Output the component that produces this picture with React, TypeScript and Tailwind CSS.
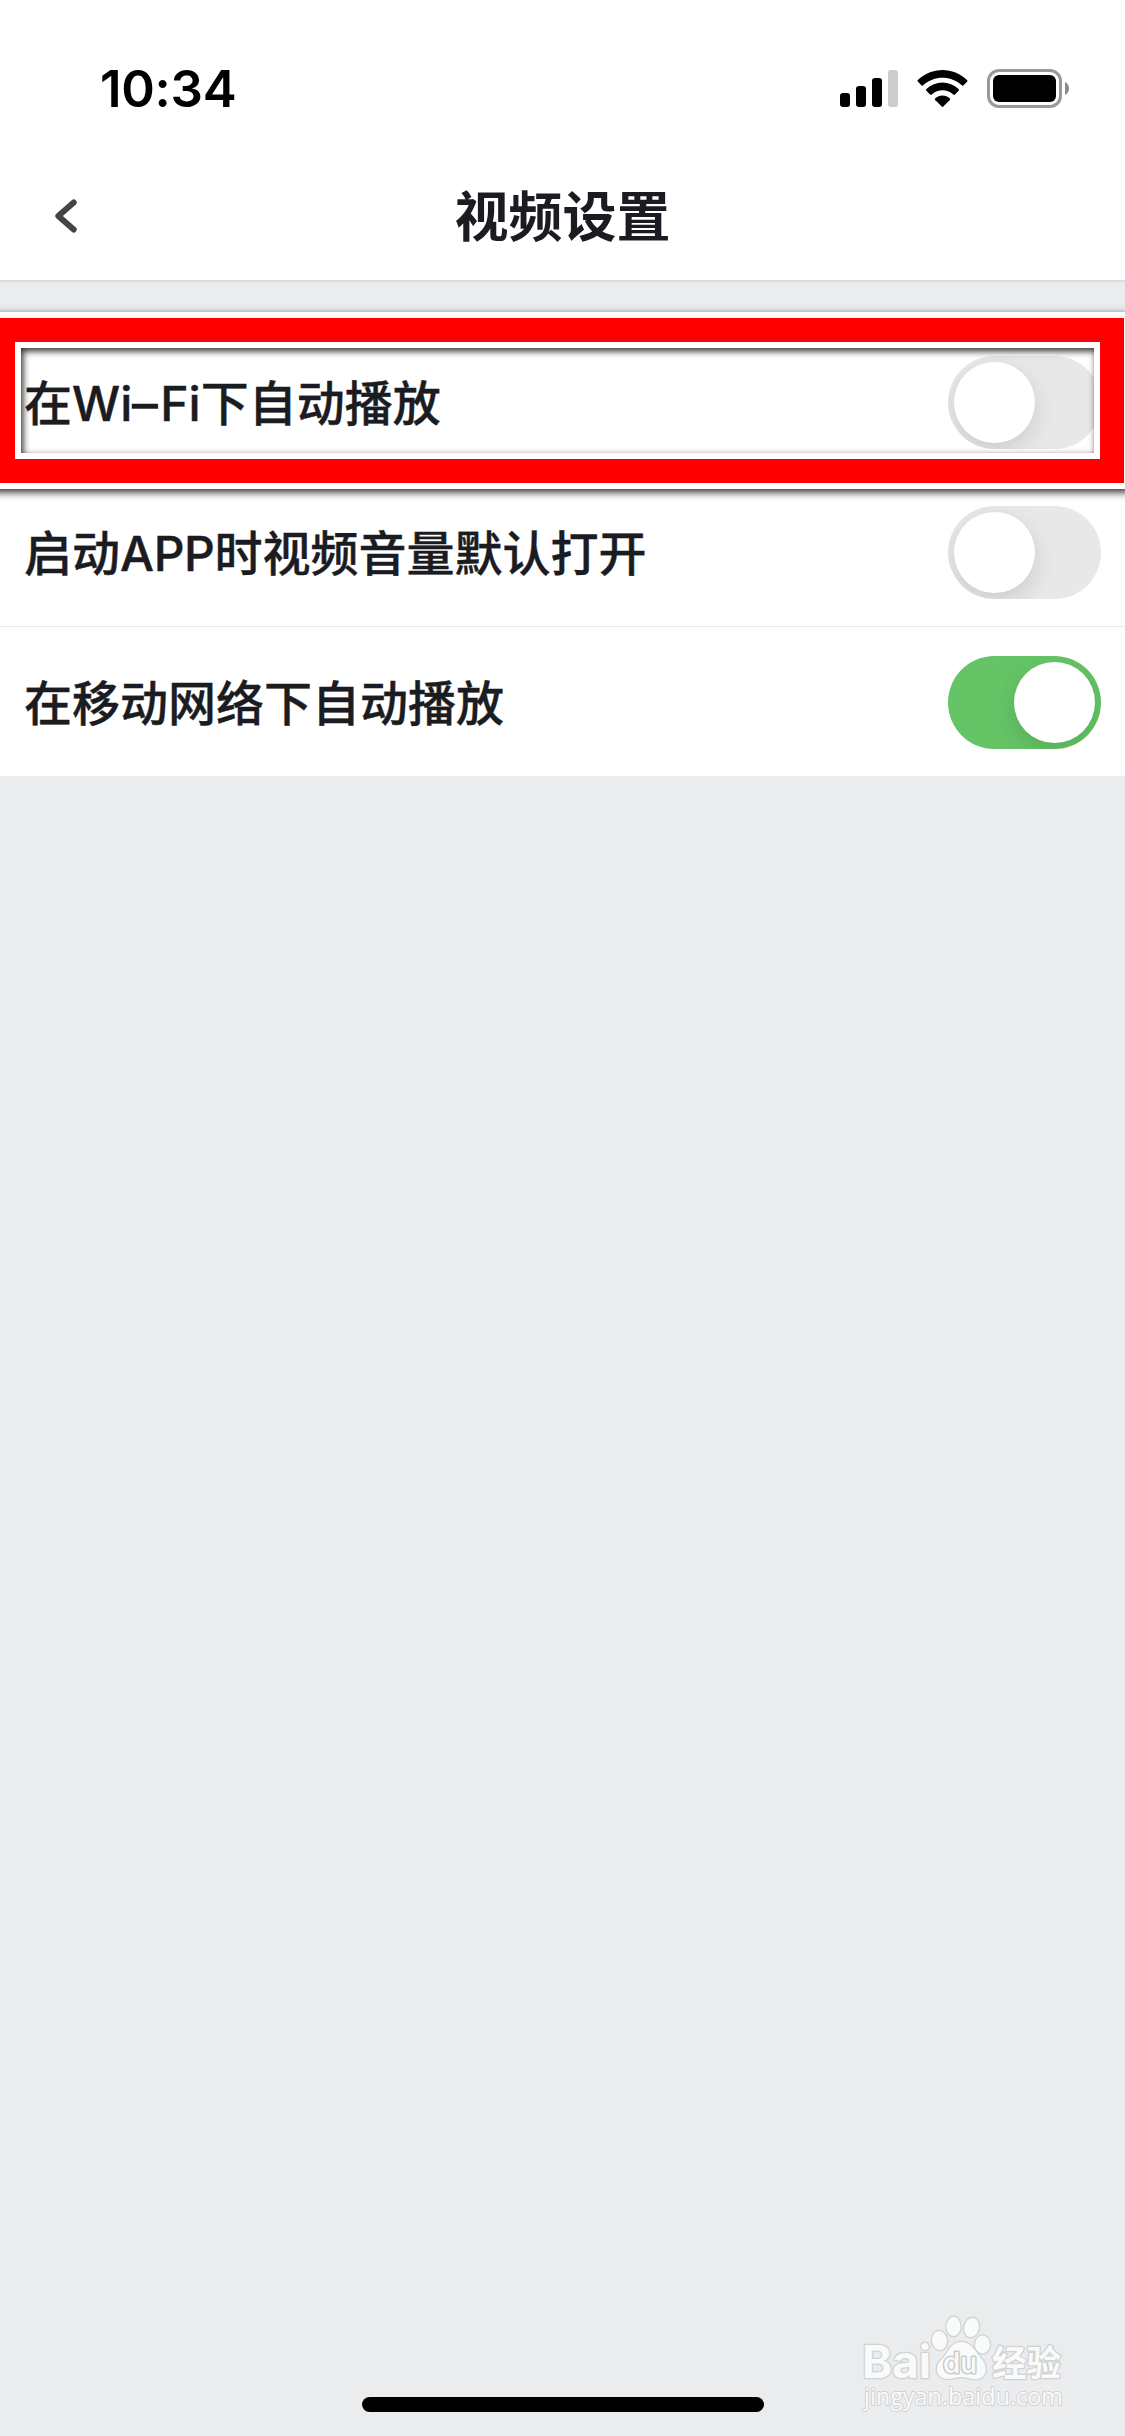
import React from 'react';

function StatusBar() {
  return (
    <div className="flex h-[150px] items-start justify-between pl-[100px] pr-[56px] pt-[69px]">
      <div className="h-[40px] whitespace-nowrap text-[51px] font-semibold leading-[40px] tracking-[-0.3px] text-black">
        10:34
      </div>
      <div className="flex h-[39px] items-start">
        <div className="mt-[1px] flex h-[37px] items-end gap-[6px]">
          <div className="h-[14px] w-[10px] rounded-[3px] bg-black" />
          <div className="h-[21px] w-[10px] rounded-[3px] bg-black" />
          <div className="h-[29px] w-[10px] rounded-[3px] bg-black" />
          <div className="h-[37px] w-[10px] rounded-[3px] bg-[#cccccc]" />
        </div>
        <svg className="ml-[19px] mt-[1px]" width="51" height="37" viewBox="0 0 51 37">
          <path d="M0.6 10.2 Q0.2 11.2 1 11.8 L4.6 15.4 Q5.4 16 6.2 15.2 C17 5.2 34 5.2 44.8 15.2 Q45.6 16 46.4 15.4 L50 11.8 Q50.8 11.2 50.2 10.2 C36 -3.4 15 -3.4 0.6 10.2Z" />
          <path d="M9.2 19.2 Q8.8 20.2 9.4 20.8 L13 24.4 Q13.8 25.2 14.8 24.4 C21 18.8 30 18.8 36.2 24.4 Q37.2 25.2 38 24.4 L41.6 20.8 Q42.2 20.2 41.8 19.2 C32.4 10.4 18.6 10.4 9.2 19.2Z" />
          <path d="M18 28.4 Q17.6 29.4 18.4 30.2 L25 36.7 Q25.5 37.1 26 36.7 L32.6 30.2 Q33.4 29.4 33 28.4 C28.6 24.4 22.4 24.4 18 28.4Z" />
        </svg>
        <div className="ml-[19px] flex h-[39px] w-[75px] rounded-[12px] border-[3px] border-[#999999] p-[3px]">
          <div className="h-[27px] w-[63px] rounded-[6px] bg-black" />
        </div>
        <svg className="ml-[3px] mt-[13px]" width="4" height="13" viewBox="0 0 4 13">
          <path d="M0 0 C5.3 2.2 5.3 10.8 0 13Z" fill="#8a8a8a" />
        </svg>
      </div>
    </div>
  );
}

function Toggle({ on = false }: { on?: boolean }) {
  return (
    <div
      className={
        on
          ? 'flex h-[93px] w-[153px] justify-end overflow-hidden rounded-full bg-[#65c466] p-[6px]'
          : 'flex h-[93px] w-[153px] justify-start overflow-hidden rounded-full bg-[#e8e8e8] p-[6px]'
      }
    >
      <div className="h-[81px] w-[81px] rounded-full bg-white shadow-[0_8px_22px_rgba(0,25,15,0.13)]" />
    </div>
  );
}

function Row({ children, on, divider }: { children: React.ReactNode; on?: boolean; divider?: boolean }) {
  return (
    <div
      className={
        divider
          ? 'flex h-[150px] items-start justify-between border-t border-[#e8e9ea] bg-white pl-[24px] pr-[24px] pt-[29px]'
          : 'flex h-[150px] items-start justify-between bg-white pl-[24px] pr-[24px] pt-[30px]'
      }
    >
      <div className="mt-[1px] h-[93px] whitespace-nowrap text-[48px] font-medium leading-[93px] text-[#1b1c22] [-webkit-text-stroke:0.4px_#1b1c22]">
        {children}
      </div>
      <Toggle on={on} />
    </div>
  );
}

function Watermark() {
  return (
    <svg
      className="absolute right-[55px] top-[2310px]"
      width="210"
      height="105"
      viewBox="0 0 210 105"
      fill="#f9fafa"
      stroke="#d0d2d3"
      strokeWidth="2.6"
      paintOrder="stroke"
      strokeLinejoin="round"
    >
      <text x="2" y="68" fontFamily="Inter" fontWeight="700" fontSize="45" textLength="69" lengthAdjust="spacingAndGlyphs">Bai</text>
      <ellipse cx="79.500" cy="30.500" rx="7.500" ry="9.500" transform="rotate(-8 79.500 30.500)" />
      <ellipse cx="93.500" cy="16.500" rx="7" ry="9.700" />
      <ellipse cx="111.500" cy="17.500" rx="7.300" ry="9.700" transform="rotate(12 111.500 17.500)" />
      <ellipse cx="122.500" cy="34.500" rx="7.500" ry="9" />
      <path d="M101 32 C90 32 88 44 81 50 C74 57 76 68 87 69 C93 69 96 67 101 67 C107 67 111 70 118 69 C127 67 128 57 122 49 C115 42 112 32 101 32Z" />
      <text x="83" y="63" fontFamily="Inter" fontWeight="500" fontSize="28" strokeWidth="3" stroke="#c9cbcc" textLength="34" lengthAdjust="spacingAndGlyphs">du</text>
      <text x="132" y="66" fontFamily="Noto Sans CJK SC" fontWeight="700" fontSize="35" textLength="69" lengthAdjust="spacingAndGlyphs">经验</text>
      <text x="4" y="95" fontFamily="Open Sans" fontWeight="500" fontSize="23.5" strokeWidth="1.800" textLength="199" lengthAdjust="spacingAndGlyphs">jingyan.baidu.com</text>
    </svg>
  );
}

export default function App() {
  return (
    <div className="relative flex h-[2436px] w-[1125px] flex-col overflow-hidden bg-[#ebecee] font-['Inter','Noto_Sans_CJK_SC',sans-serif]">
      <header className="h-[282px] border-b-2 border-[#dbdcdf] bg-white">
        <StatusBar />
        <div className="grid h-[130px] grid-cols-[120px_1fr_120px] items-center">
          <svg className="mt-[1px] ml-[54px]" width="24" height="36" viewBox="0 0 24 36" fill="none" stroke="#434349" strokeWidth="6" strokeLinecap="round" strokeLinejoin="round">
            <path d="M19.700 4.500 L4.300 18 L19.700 31.500" />
          </svg>
          <h1 className="mt-[5px] text-center text-[54px] font-semibold leading-[80px] text-[#1b1c22]">
            视频设置
          </h1>
        </div>
      </header>

      <main className="mt-[44px]">
        <Row>
          在Wi<span className="inline-block w-[28px] origin-left scale-x-[1.08]">–</span>Fi下自动播放
        </Row>
        <Row>
          启动<span className="tracking-[-0.4px]">APP</span>时视频音量默认打开
        </Row>
        <Row divider on>在移动网络下自动播放</Row>
      </main>

      <div className="absolute -left-[15px] top-[312px] h-[177px] w-[1144.5px] border-[6px] border-white shadow-[0_3px_8px_rgba(0,0,0,0.85)]">
        <div className="h-full w-full border-[24px] border-[#ff0000]">
          <div className="h-full w-full border-[6px] border-white">
            <div className="h-full w-full shadow-[inset_2px_3px_7px_rgba(0,0,0,0.85)]" />
          </div>
        </div>
      </div>

      <Watermark />
      <div className="mb-[24px] mt-auto h-[15px] w-[402px] self-center rounded-full bg-black" />
    </div>
  );
}
